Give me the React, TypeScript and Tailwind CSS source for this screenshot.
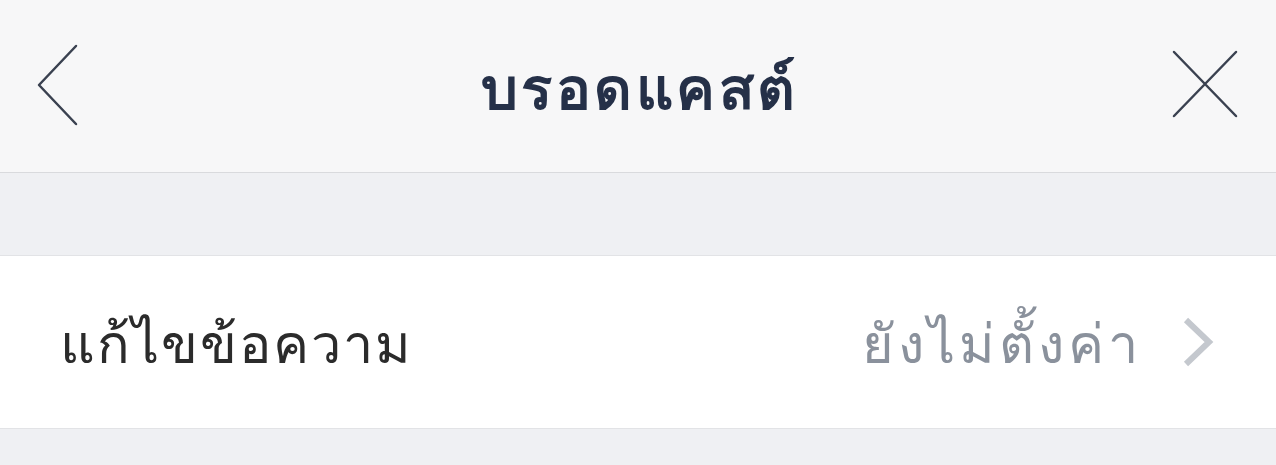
export default function App() {
  return (
    <div className="h-[465px] w-full overflow-hidden bg-[#eff0f3] [font-family:'Noto_Sans','DejaVu_Sans',sans-serif]">
      <header className="relative flex h-[173px] items-center justify-center border-b border-[#d9dadd] bg-[#f7f7f8]">
        <button type="button" className="absolute left-[36px] top-[44px]">
          <svg width="44" height="82" viewBox="0 0 44 82" fill="none">
            <path d="M40 2 L3 41 L40 80" stroke="#3a4150" strokeWidth="2.5" strokeLinecap="round" strokeLinejoin="round" />
          </svg>
        </button>
        <h1 className="pl-[3px] pt-[2px] text-[58px] font-bold leading-none tracking-[3.5px] text-[#253048]">บรอดแคสต์</h1>
        <button type="button" className="absolute right-[38px] top-[50px]">
          <svg width="66" height="68" viewBox="0 0 66 68" fill="none">
            <path d="M2 2 L64 66 M64 2 L2 66" stroke="#3a4150" strokeWidth="2.5" strokeLinecap="round" />
          </svg>
        </button>
      </header>
      <div className="h-[82px]" />
      <div className="flex h-[174px] items-center justify-between border-y border-[#e2e3e6] bg-white pl-[60px] pr-[62px]">
        <span className="text-[54px] leading-none tracking-[2px] text-[#2b2b2b]">แก้ไขข้อความ</span>
        <div className="flex items-center gap-[40px]">
          <span className="text-[54px] leading-none tracking-[4px] text-[#8a919c]">ยังไม่ตั้งค่า</span>
          <svg width="32" height="50" viewBox="0 0 32 50" fill="none">
            <path d="M4 3 L27 25 L4 47" stroke="#c4c8ce" strokeWidth="6" strokeLinejoin="miter" />
          </svg>
        </div>
      </div>
    </div>
  );
}
